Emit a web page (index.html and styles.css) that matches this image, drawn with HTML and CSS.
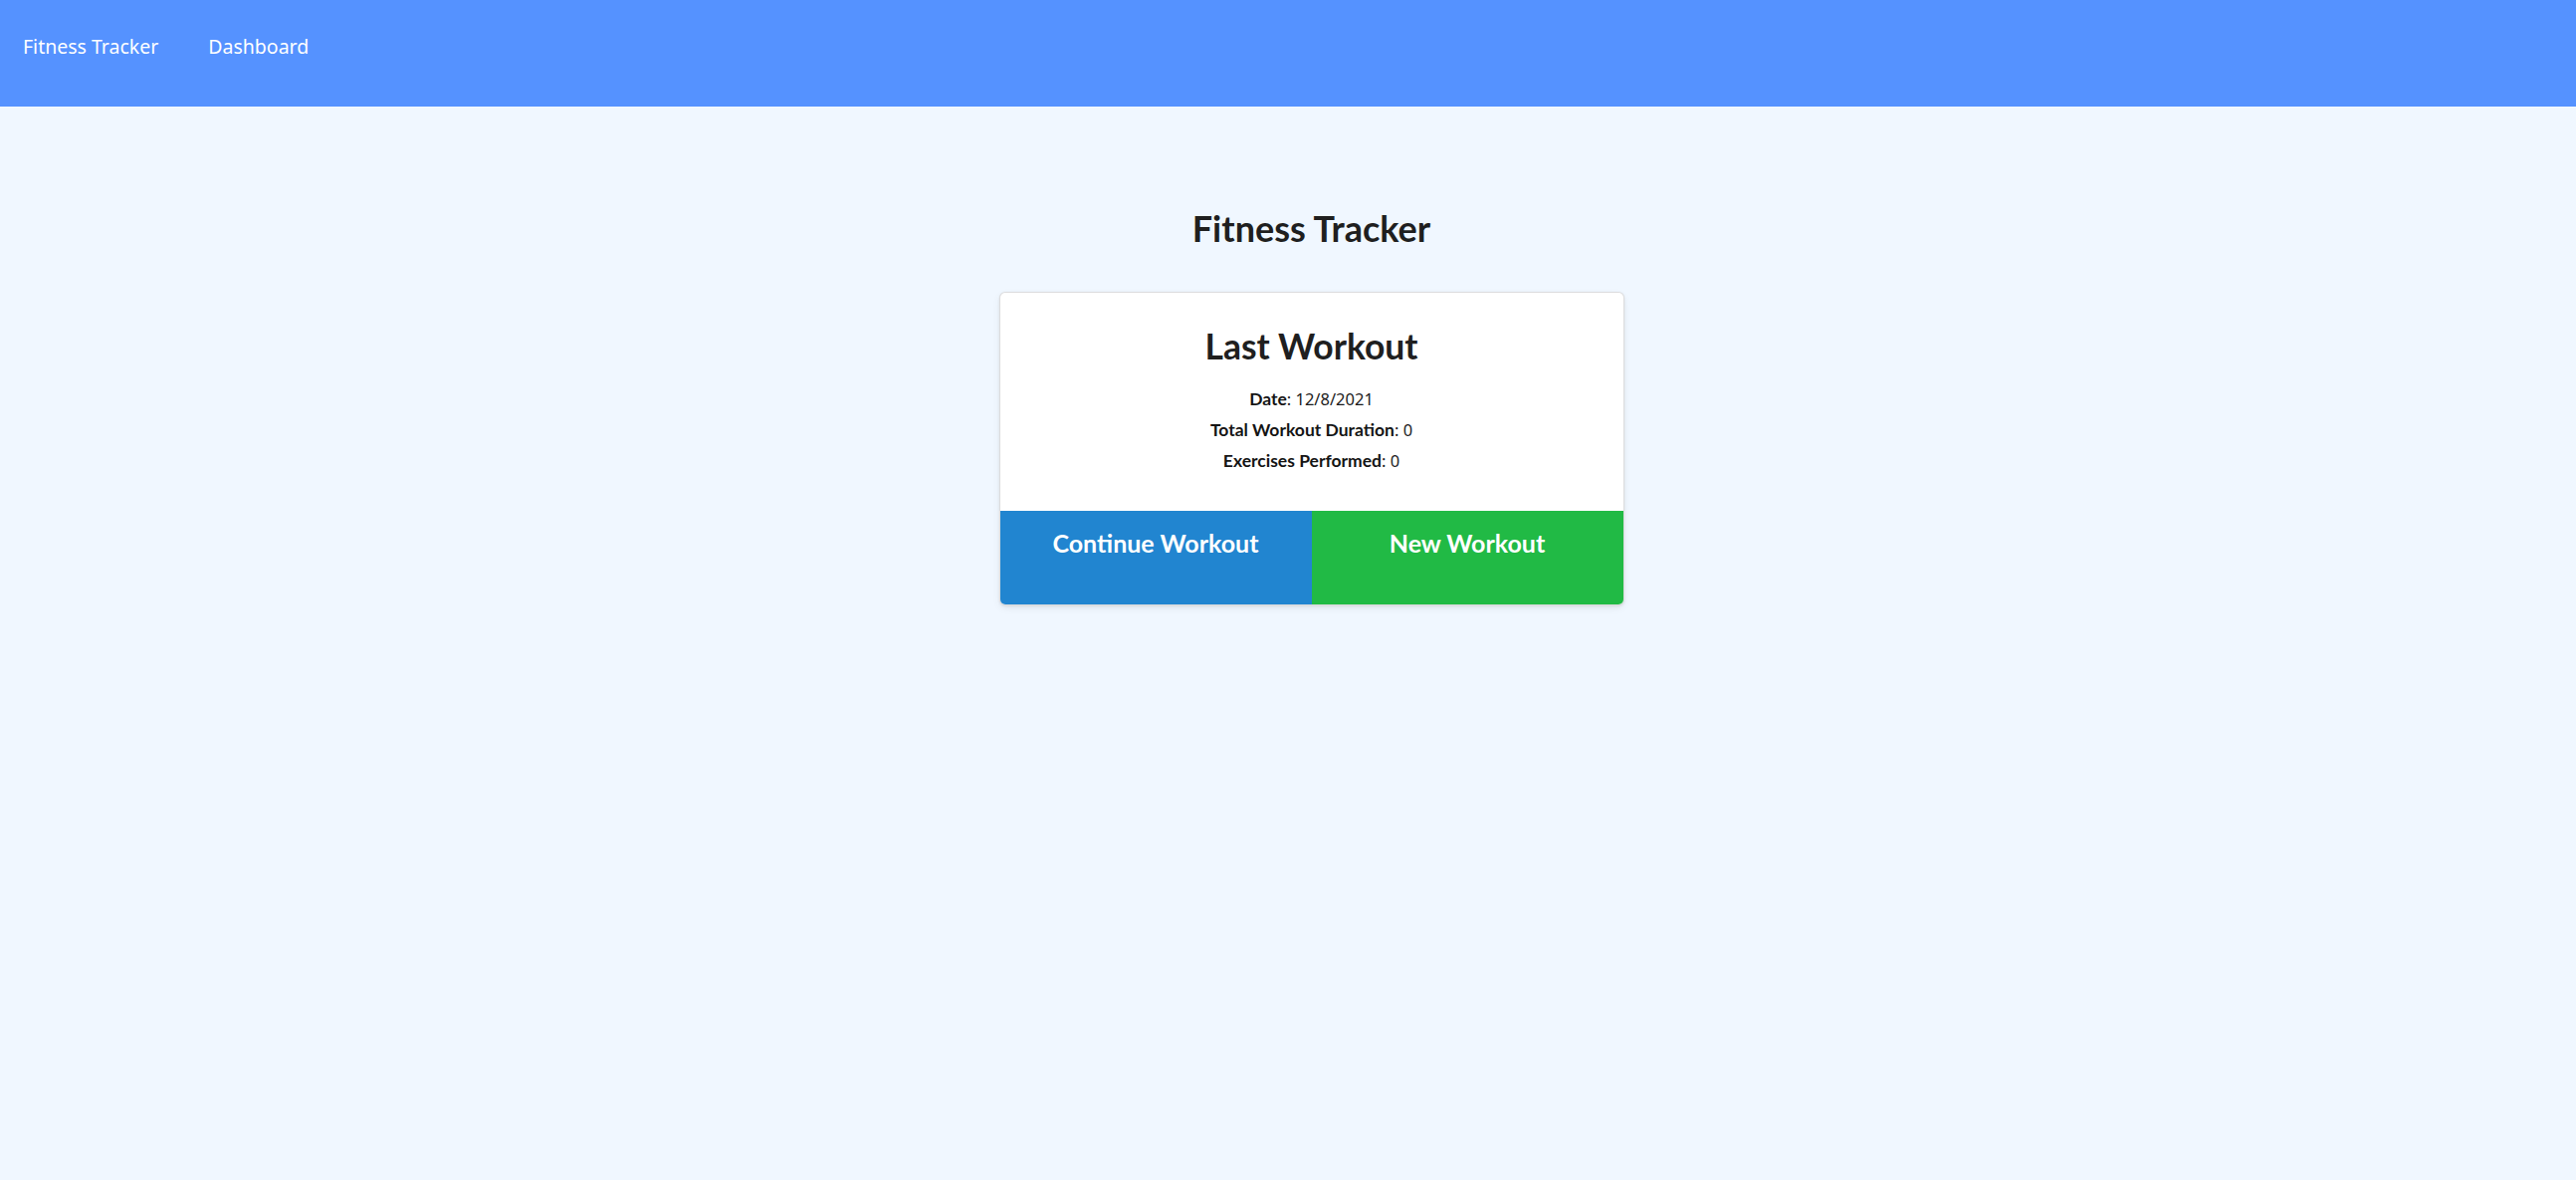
FILE: index.html
```html
<!DOCTYPE html>
<html lang="en">
<head>
<meta charset="utf-8">
<title>Fitness Tracker</title>
<link rel="stylesheet" href="styles.css">
</head>
<body>
<nav class="topbar">
  <a class="nav-link" href="#">Fitness Tracker</a>
  <a class="nav-link" href="#">Dashboard</a>
</nav>
<main class="main">
  <h1 class="page-title">Fitness Tracker</h1>
  <section class="card">
    <div class="card-body">
      <h2 class="card-title">Last Workout</h2>
      <div class="info-line"><strong>Date</strong>: 12/8/2021</div>
      <div class="info-line"><strong>Total Workout Duration</strong>: 0</div>
      <div class="info-line"><strong>Exercises Performed</strong>: 0</div>
    </div>
    <div class="card-actions">
      <button class="btn btn-blue">Continue Workout</button>
      <button class="btn btn-green">New Workout</button>
    </div>
  </section>
</main>
</body>
</html>
```
FILE: styles.css
```css
html, body {
  margin: 0;
  padding: 0;
}
body {
  background: #f0f7ff;
  font-family: "Noto Sans", "Open Sans", sans-serif;
  color: rgba(0, 0, 0, 0.87);
  min-height: 1185px;
}
.topbar {
  background: #5592ff;
  height: 107px;
  box-sizing: border-box;
  padding: 33px 0 0 23px;
  display: flex;
  align-items: flex-start;
  gap: 50px;
}
.nav-link {
  color: #ffffff;
  text-decoration: none;
  font-size: 19.5px;
  line-height: 27px;
}
.main {
  display: flex;
  flex-direction: column;
  align-items: center;
  padding-left: 47px;
}
.page-title {
  font-family: Lato, sans-serif;
  font-weight: 700;
  font-size: 36px;
  line-height: 1.2;
  margin: 101px 0 43px;
  color: #1f1f1f;
}
.card {
  width: 626px;
  background: #ffffff;
  border-radius: 5px;
  overflow: hidden;
  box-shadow: 0 0 0 1px #dcdcde, 0 1px 3px 0 #c8c8ca, 0 3px 8px rgba(0, 0, 0, 0.08);
}
.card-body {
  padding: 33px 0 35px;
  text-align: center;
}
.card-title {
  font-family: Lato, sans-serif;
  font-weight: 700;
  font-size: 35.5px;
  line-height: 1.2;
  margin: 0 0 15px;
  color: #1f1f1f;
}
.info-line {
  font-family: "Noto Sans", sans-serif;
  font-size: 16.5px;
  line-height: 31px;
  color: #1c1c1c;
}
.info-line strong {
  font-family: Lato, sans-serif;
  font-weight: 700;
  font-size: 17.5px;
  color: #151515;
}
.card-actions {
  display: flex;
}
.btn {
  flex: 1;
  border: 0;
  margin: 0;
  height: 94px;
  padding: 17px 0 0;
  box-sizing: border-box;
  display: flex;
  justify-content: center;
  align-items: flex-start;
  font-family: Lato, sans-serif;
  font-weight: 700;
  font-size: 25px;
  line-height: 1.2;
  color: #ffffff;
  cursor: pointer;
}
.btn-blue {
  background: #2185d0;
}
.btn-green {
  background: #21ba45;
}
```
